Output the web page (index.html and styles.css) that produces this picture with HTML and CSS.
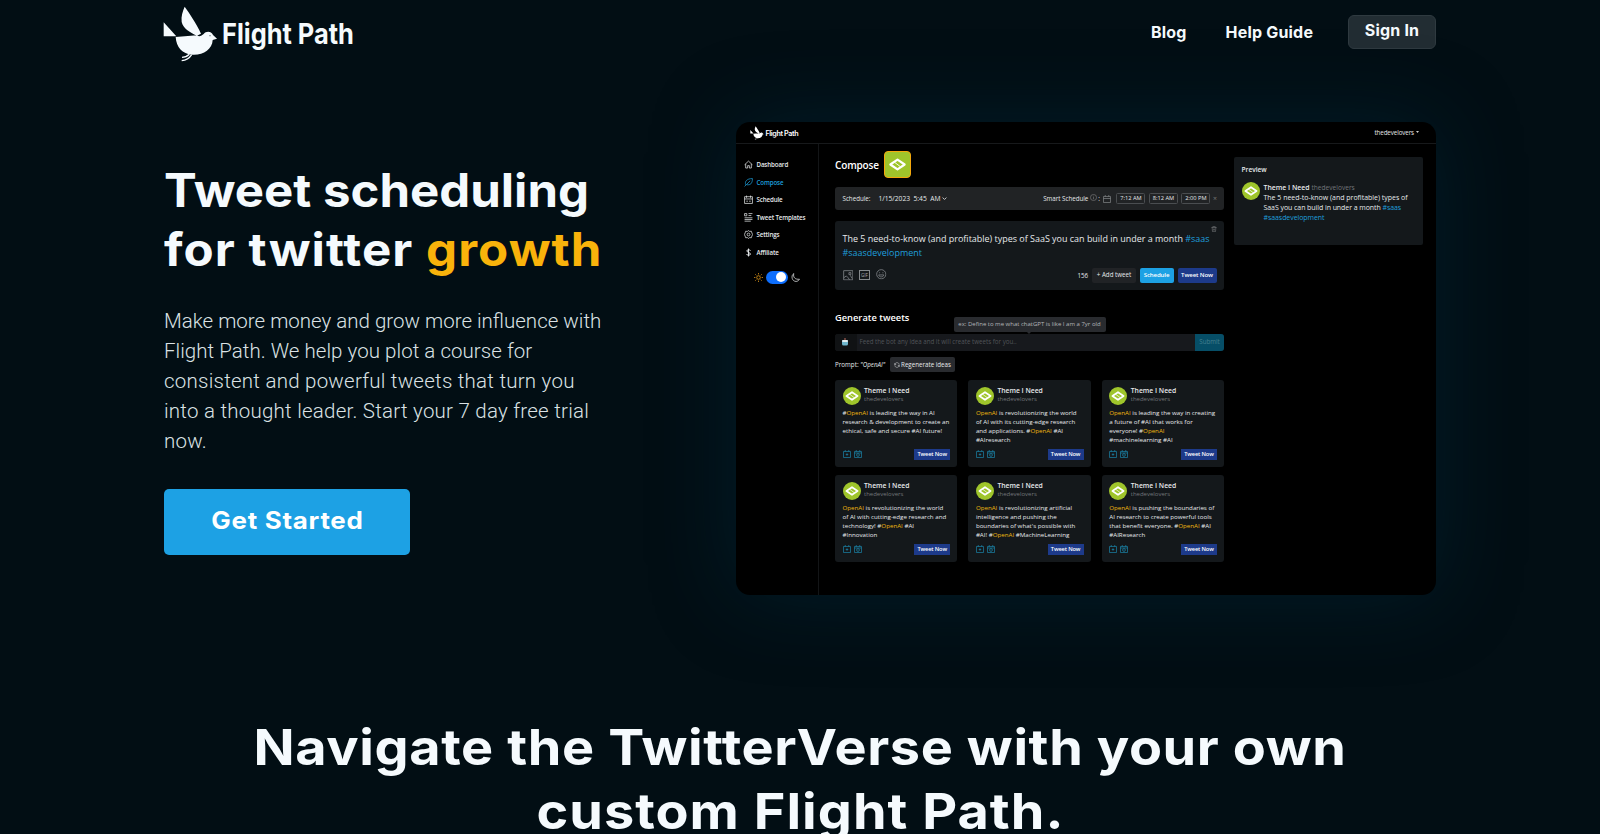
FILE: index.html
```html
<!DOCTYPE html>
<html lang="en">
<head>
<meta charset="utf-8">
<title>Flight Path</title>
<link rel="stylesheet" href="styles.css">
</head>
<body>
<svg class="defs" aria-hidden="true">
  <symbol id="bird" viewBox="40 18 164 168">
    <path fill="currentColor" d="M42 67L80 109H42ZM105 20C118 38 140 70 154 101L142 107C120 98 100 84 96 66C94 48 99 34 105 20ZM78 111L142 106C150 112 156 106 162 102C168 94 184 92 190 105L202 116L189 120C188 148 160 166 128 164C98 162 80 142 78 111Z"/>
    <path fill="none" stroke="currentColor" stroke-width="4" d="M119 163C113 169 106 172 97 172M126 164C119 175 110 181 96 182"/>
    <circle cx="181" cy="107" r="2" fill="#5c686d"/>
  </symbol>
  <symbol id="mark" viewBox="0 0 18 18"><path fill="none" stroke="#fff" stroke-width="1.7" stroke-linejoin="round" d="M3.400 9L9 5.200 14.600 9 9 12.800z"/><path fill="none" stroke="#fff" stroke-width=".7" d="M7 7.500L11 10.500"/></symbol>
  <symbol id="home" viewBox="0 0 16 16"><path d="M1 8.500L8 2l7 6.500M3 7v7.300h3.500V10h3v4.300H13V7"/></symbol>
  <symbol id="feather" viewBox="0 0 16 16"><path d="M1 15L11 5M3 12C1 6 5 1 15 1c0 9-4 12-10 11"/></symbol>
  <symbol id="cal" viewBox="0 0 16 16"><path d="M1 3h14v12H1zM1 7h14M4.500 1v4M11.500 1v4M4 11h3M9 11h3"/></symbol>
  <symbol id="calplain" viewBox="0 0 16 16"><path d="M1 3h14v12H1zM1 7h14M4.500 0v3M11.500 0v3"/></symbol>
  <symbol id="list" viewBox="0 0 16 16"><path d="M1 1h4v4H1zM8 1h7M8 4.500h5M1 8.500h14M1 11.500h14M1 14.500h11"/></symbol>
  <symbol id="gear" viewBox="0 0 16 16"><path d="M8 1l2 1.500 3-.3 1 3L15.300 8 14 10.800l-1 3-3-.3L8 15l-2-1.500-3 .3-1-3L.7 8 2 5.200l1-3 3 .3z"/><circle cx="8" cy="8" r="2.500"/></symbol>
  <symbol id="dollar" viewBox="0 0 16 16"><path stroke-width="1.700" d="M8 1v14M11.500 4.800C11 2.500 5 2.500 5 5.200S11.500 8 11.500 10.800 5 13.500 4.500 10.800"/></symbol>
  <symbol id="sun" viewBox="0 0 16 16"><circle cx="8" cy="8" r="3.200"/><path d="M8 0v2.500M8 13.500V16M0 8h2.500M13.500 8H16M2.300 2.300l1.800 1.800M11.900 11.900l1.800 1.800M2.300 13.700l1.800-1.800M11.900 4.100l1.800-1.800"/></symbol>
  <symbol id="moon" viewBox="0 0 16 16"><path d="M5 1C-1 5 2 15 9 15c3 0 5-2 6-4C8 12 3 8 5 1z"/></symbol>
  <symbol id="pic" viewBox="0 0 16 16"><path d="M1 1h14v14H1zM1 12l4-3 3 3 2 3M9 4h3v3H9zM11 8l3 5"/></symbol>
  <symbol id="smile" viewBox="0 0 16 16"><circle cx="8" cy="8" r="7"/><path d="M4 9c1 4 7 4 8 0zM5.500 5v1.500M10.500 5v1.500"/></symbol>
  <symbol id="trash" viewBox="0 0 16 16"><path d="M1 4h14M5 4V1h6v3M3 4l1 11h8l1-11M6.500 7v5M9.500 7v5"/></symbol>
  <symbol id="info" viewBox="0 0 16 16"><circle cx="8" cy="8" r="7"/><path d="M8 7v5M8 4v1.500"/></symbol>
  <symbol id="redo" viewBox="0 0 16 16"><path d="M14 7C13 0 3 0 2 7M2 9c1 7 11 7 12 0M2 3v4h4M14 13V9h-4"/></symbol>
  <symbol id="caladd" viewBox="0 0 16 16"><path d="M1 3h14v12H1zM4.500 0v3M11.500 0v3M8 6.500v5M5.500 9h5"/></symbol>
  <symbol id="calclock" viewBox="0 0 16 16"><path d="M1 3h14v12H1zM4.500 0v3M11.500 0v3M1 6h14"/><circle cx="8" cy="10" r="2.800"/></symbol>
</svg>

<header class="site-header">
  <a class="brand"><svg class="brand-bird"><use href="#bird"/></svg><span class="brand-name">Flight Path</span></a>
  <nav class="site-nav"><a class="nav-blog">Blog</a><a class="nav-help">Help Guide</a><a class="sign-in">Sign In</a></nav>
</header>

<main>
<section class="hero">
  <div class="pitch">
    <h1><span class="h1-a">Tweet scheduling</span><br><span class="h1-b">for twitter <em>growth</em></span></h1>
    <p>Make more money and grow more influence with<br><span class="l2">Flight Path. We help you plot a course for</span><br><span class="loose">consistent and powerful tweets that turn you<br>into a thought leader. Start your 7 day free trial<br>now.</span></p>
    <a class="cta"><span>Get Started</span></a>
  </div>

  <div class="app">
    <div class="app-top">
      <div class="app-brand"><svg class="app-bird"><use href="#bird"/></svg><span>Flight Path</span></div>
      <div class="user">thedevelovers<i class="caret"></i></div>
    </div>
    <div class="app-body">
      <aside class="side">
        <a><svg class="ico"><use href="#home"/></svg>Dashboard</a>
        <a class="on"><svg class="ico"><use href="#feather"/></svg>Compose</a>
        <a><svg class="ico"><use href="#cal"/></svg>Schedule</a>
        <a><svg class="ico"><use href="#list"/></svg>Tweet Templates</a>
        <a><svg class="ico"><use href="#gear"/></svg>Settings</a>
        <a><svg class="ico"><use href="#dollar"/></svg>Affiliate</a>
        <div class="theme"><svg class="ico sun"><use href="#sun"/></svg><i class="toggle"></i><svg class="ico"><use href="#moon"/></svg></div>
      </aside>

      <div class="work">
        <div class="title"><h2>Compose</h2><span class="tile"><svg><use href="#mark"/></svg></span></div>

        <div class="sched">
          <span>Schedule:</span><span class="date">1/15/2023&nbsp; 5:45 &nbsp;AM</span>
          <svg class="chev" viewBox="0 0 8 8"><path d="M1 2.500l3 3 3-3"/></svg>
          <span class="smart">Smart Schedule</span><svg class="ico tiny"><use href="#info"/></svg><span class="colon">:</span>
          <svg class="ico scal"><use href="#calplain"/></svg>
          <b class="time">7:12 AM</b><b class="time">8:12 AM</b><b class="time">2:00 PM</b><span class="x">×</span>
        </div>

        <div class="editor">
          <svg class="ico trash"><use href="#trash"/></svg>
          <p>The 5 need-to-know (and profitable) types of SaaS you can build in under a month <a>#saas</a><br><a>#saasdevelopment</a></p>
          <div class="tools">
            <svg class="ico"><use href="#pic"/></svg><span class="gif">GIF</span><svg class="ico smile"><use href="#smile"/></svg>
            <span class="count">156</span><b class="btn add">+ Add tweet</b><b class="btn sky">Schedule</b><b class="btn navy">Tweet Now</b>
          </div>
        </div>

        <h3>Generate tweets</h3>
        <div class="bot">
          <span class="tip">ex: Define to me what chatGPT is like I am a 7yr old</span>
          <span class="robot"><svg viewBox="0 0 8 8"><rect x="1" y="2" width="6" height="5.500" rx="1.500" fill="#6fb6cc"/><rect x="1" y="2" width="6" height="2" rx="1" fill="#e4eef0"/><path d="M4 0v2" stroke="#bb6a5c"/></svg></span>
          <span class="ask">Feed the bot any idea and it will create tweets for you..</span>
          <span class="submit">Submit</span>
        </div>
        <div class="prompt"><span>Prompt: <i>"OpenAI"</i></span><b class="regen"><svg class="ico"><use href="#redo"/></svg>Regenerate ideas</b></div>

        <div class="cards">
          <article><header><span class="ava"><svg><use href="#mark"/></svg></span><div><b>Theme I Need</b><small>thedevelovers</small></div></header>
            <p>#<em>OpenAI</em> is leading the way in AI<br>research &amp; development to create an<br>ethical, safe and secure #AI future!</p>
            <footer><svg class="ico"><use href="#caladd"/></svg><svg class="ico"><use href="#calclock"/></svg><b>Tweet Now</b></footer></article>
          <article><header><span class="ava"><svg><use href="#mark"/></svg></span><div><b>Theme I Need</b><small>thedevelovers</small></div></header>
            <p><em>OpenAI</em> is revolutionizing the world<br>of AI with its cutting-edge research<br>and applications. #<em>OpenAI</em> #AI<br>#AIresearch</p>
            <footer><svg class="ico"><use href="#caladd"/></svg><svg class="ico"><use href="#calclock"/></svg><b>Tweet Now</b></footer></article>
          <article><header><span class="ava"><svg><use href="#mark"/></svg></span><div><b>Theme I Need</b><small>thedevelovers</small></div></header>
            <p><em>OpenAI</em> is leading the way in creating<br>a future of #AI that works for<br>everyone! #<em>OpenAI</em><br>#machinelearning #AI</p>
            <footer><svg class="ico"><use href="#caladd"/></svg><svg class="ico"><use href="#calclock"/></svg><b>Tweet Now</b></footer></article>
          <article><header><span class="ava"><svg><use href="#mark"/></svg></span><div><b>Theme I Need</b><small>thedevelovers</small></div></header>
            <p><em>OpenAI</em> is revolutionizing the world<br>of AI with cutting-edge research and<br>technology! #<em>OpenAI</em> #AI<br>#Innovation</p>
            <footer><svg class="ico"><use href="#caladd"/></svg><svg class="ico"><use href="#calclock"/></svg><b>Tweet Now</b></footer></article>
          <article><header><span class="ava"><svg><use href="#mark"/></svg></span><div><b>Theme I Need</b><small>thedevelovers</small></div></header>
            <p><em>OpenAI</em> is revolutionizing artificial<br>intelligence and pushing the<br>boundaries of what's possible with<br>#AI! #<em>OpenAI</em> #MachineLearning</p>
            <footer><svg class="ico"><use href="#caladd"/></svg><svg class="ico"><use href="#calclock"/></svg><b>Tweet Now</b></footer></article>
          <article><header><span class="ava"><svg><use href="#mark"/></svg></span><div><b>Theme I Need</b><small>thedevelovers</small></div></header>
            <p><em>OpenAI</em> is pushing the boundaries of<br>AI research to create powerful tools<br>that benefit everyone. #<em>OpenAI</em> #AI<br>#AIResearch</p>
            <footer><svg class="ico"><use href="#caladd"/></svg><svg class="ico"><use href="#calclock"/></svg><b>Tweet Now</b></footer></article>
        </div>
      </div>

      <div class="preview">
        <h4>Preview</h4>
        <div class="post"><span class="ava"><svg><use href="#mark"/></svg></span>
          <p><b>Theme I Need</b> <small>thedevelovers</small><br>The 5 need-to-know (and profitable) types of<br><span class="tight">SaaS you can build in under a month <a>#saas</a><br><a>#saasdevelopment</a></span></p></div>
      </div>
    </div>
  </div>
</section>

<section class="navigate">
  <h2><span class="nav-a">Navigate the TwitterVerse with your own</span><br><span class="nav-b">custom Flight Path.</span></h2>
</section>
</main>
</body>
</html>
```
FILE: styles.css
```css
* { box-sizing: border-box; }
html, body { height: 100%; }
body {
  margin: 0;
  overflow: hidden;
  background: #020e14;
  color: #f5fafd;
  font-family: Inter, "Liberation Sans", sans-serif;
}
h1, h2, h3, h4, p { margin: 0; }
svg { display: block; flex: none; }
.defs { display: none; }
.ico { width: 9px; height: 9px; fill: none; stroke: currentColor; stroke-width: 1.3; }

/* Site header */
.site-header {
  width: 1272px;
  height: 70px;
  margin: 0 auto;
  display: flex;
  justify-content: space-between;
}
.brand { display: flex; }
.brand-bird { width: 54.700px; height: 56px; margin: 6px 0 0 -.7px; }
.brand-name {
  margin: 15.500px 0 0 4px;
  font-size: 29px;
  line-height: 35px;
  font-weight: 700;
  white-space: nowrap;
  transform: scaleX(.876);
  transform-origin: left;
}
.site-nav { display: flex; font-size: 16px; font-weight: 700; line-height: 20px; white-space: nowrap; letter-spacing: .2px; }
.nav-blog { width: 74.500px; padding-top: 22px; }
.nav-help { width: 122.500px; padding-top: 22px; }
.sign-in {
  width: 88px;
  height: 34px;
  margin-top: 15px;
  padding-top: 4px;
  border: 1px solid #2f3a40;
  border-radius: 6px;
  background: #222d33;
  text-align: center;
}

/* Hero */
.hero {
  width: 1272px;
  margin: 0 auto;
  display: flex;
  justify-content: space-between;
  align-items: flex-start;
}
.pitch { padding-top: 90.500px; white-space: nowrap; }
h1 { width: 440px; font-size: 46px; line-height: 59px; font-weight: 700; }
h1 span { display: inline-block; transform-origin: left; }
.h1-a { transform: scaleX(1.068); }
.h1-b { letter-spacing: .98px; transform: scaleX(1.070); }
h1 em { font-style: normal; color: #f9b30b; }
.pitch p {
  margin-top: 27px;
  font: 300 20.500px/30px Roboto, "Liberation Sans", sans-serif;
  color: #dbe2e5;
}
.l2 { letter-spacing: .04px; }
.loose { letter-spacing: .24px; }
.cta {
  display: block;
  width: 246px;
  height: 66px;
  margin-top: 33.500px;
  border-radius: 5px;
  background: #1da1e4;
  color: #fff;
  font-size: 24px;
  font-weight: 700;
  line-height: 64.500px;
  letter-spacing: .67px;
  text-align: center;
}
.cta span { display: inline-block; transform: scaleX(1.080); }

/* Product window */
.app {
  width: 700px;
  height: 473px;
  margin-top: 52px;
  border-radius: 14px;
  overflow: hidden;
  background: #000;
  color: #e6e9eb;
  font-family: "Open Sans", "Noto Sans", sans-serif;
  font-size: 6.200px;
  white-space: nowrap;
  box-shadow: 0 0 84px rgba(0, 55, 78, .34);
}
.app-top {
  height: 22px;
  padding: 0 17px 0 14px;
  border-bottom: 1px solid #17191b;
  display: flex;
  justify-content: space-between;
}
.app-brand { display: flex; align-items: flex-start; color: #fff; font: 600 7.200px/10px Inter, sans-serif; letter-spacing: -.38px; }
.app-brand span { margin: 6.500px 0 0 1.500px; }
.app-bird { width: 14px; height: 14px; margin-top: 4px; }
.user { display: flex; align-items: center; font-size: 6.200px; letter-spacing: -.08px; height: 20px; }
.caret { width: 3px; height: 2px; margin-left: 2px; background: #ccc; clip-path: polygon(0 0, 100% 0, 50% 100%); }
.app-body { height: 451px; display: flex; align-items: flex-start; }
.side {
  width: 82.500px;
  height: 451px;
  padding: 12px 0 0 7.500px;
  border-right: 1px solid #131517;
  font-size: 6.200px;
  letter-spacing: -.13px;
  font-weight: 600;
}
.side a { height: 17.500px; display: flex; align-items: center; gap: 4px; }
.side .on { color: #1d9fdc; }
.theme { display: flex; align-items: center; gap: 3.500px; margin: 6px 0 0 10px; height: 20px; }
.sun { color: #f0a21c; }
.toggle { width: 21.500px; height: 13px; padding: 1.500px; border-radius: 7px; background: #0d6efd; display: flex; justify-content: flex-end; }
.toggle::after { content: ""; width: 10px; height: 10px; border-radius: 50%; background: #fff; }

.work { width: 389px; margin-left: 16.500px; padding-top: 7px; }
.title { display: flex; align-items: center; height: 27px; gap: 6px; }
.title h2 { font-size: 10px; letter-spacing: -.15px; font-weight: 600; color: #fff; width: 43px; }
.tile { width: 27px; height: 27px; border: 1px solid #f5a80d; border-radius: 4px; background: #9fc52b; display: grid; place-items: center; }
.tile svg { width: 23px; height: 23px; }
.sched {
  height: 23px;
  margin-top: 9px;
  padding: 0 7px 0 7.500px;
  border-radius: 3px;
  background: #212325;
  display: flex;
  align-items: center;
}
.date { margin-left: 8px; font-size: 6.700px; }
.chev { width: 5px; height: 5px; margin-left: 2px; fill: none; stroke: #ddd; stroke-width: 1.400; }
.smart { margin-left: auto; }
.tiny { width: 7px; height: 7px; margin: -3px 1px 0 2px; color: #888; }
.scal { width: 8px; height: 8px; margin: 0 5.500px 0 3px; color: #8b8e90; }
.time { width: 29px; height: 11.500px; margin-right: 3.500px; border: 1px solid #4a4d50; border-radius: 1.500px; font-size: 5.700px; line-height: 9.500px; font-weight: 400; text-align: center; }
.x { color: #777; font-size: 7px; margin-left: -1px; }
.editor {
  position: relative;
  height: 69px;
  margin-top: 11px;
  padding: 10.500px 7.500px 0;
  border-radius: 3px;
  background: #14181b;
}
.trash { position: absolute; right: 7px; top: 5px; width: 6px; height: 6px; color: #8a8d90; }
.editor p { font-size: 8.960px; line-height: 14.900px; }
.app p a { color: #1f9fdc; }
.tools { display: flex; align-items: center; margin-top: 6.500px; height: 15px; }
.tools .ico { width: 10.500px; height: 10.500px; color: #85898c; stroke-width: 1.200; }
.tools .smile { margin-top: -2px; }
.gif { width: 11px; height: 10px; margin: 0 6px; border: 1px solid #85898c; font-size: 4.500px; line-height: 8px; text-align: center; color: #a5a8aa; }
.count { margin: 0 4px 0 auto; }
.btn { height: 15px; line-height: 14.500px; border-radius: 2px; font-weight: 400; text-align: center; }
.add { width: 44px; background: #212326; }
.sky { width: 34px; margin: 0 4px 0 3.500px; background: #1da1e4; color: #fff; font-weight: 600; font-size: 6.100px; letter-spacing: -.12px; }
.navy { width: 39px; background: #1d3a8a; color: #fff; font-weight: 600; font-size: 6.100px; letter-spacing: -.12px; }
.work h3 { margin-top: 21px; font-size: 9.300px; line-height: 14px; font-weight: 600; color: #fff; }
.bot { position: relative; display: flex; height: 16.500px; margin-top: 9px; line-height: 16px; border-radius: 3px; background: #17191d; }
.robot { width: 22px; display: grid; place-items: center; border-radius: 3px 0 0 3px; background: #101214; }
.robot svg { width: 8px; height: 8px; margin-right: 2px; }
.ask { flex: 1; padding-left: 2.500px; color: #515458; }
.submit { width: 29px; border-radius: 0 3px 3px 0; background: #064e67; color: #45808f; text-align: center; }
.tip { position: absolute; left: 118.500px; top: -17px; width: 152px; height: 14.500px; line-height: 14px; border-radius: 2px; background: #292b2f; color: #b3b6b9; text-align: center; font-size: 6px; }
.tip::after { content: ""; position: absolute; left: 73.500px; top: 14.500px; border: 2px solid transparent; border-top-color: #292b2f; }
.prompt { display: flex; align-items: center; height: 15px; margin-top: 6.500px; }
.prompt span { width: 55px; letter-spacing: .04px; }
.regen { width: 64.500px; height: 14.500px; border-radius: 2px; background: #292b2f; display: flex; align-items: center; justify-content: center; gap: 1.500px; font-weight: 400; }
.regen .ico { width: 6px; height: 6px; }
.cards { display: grid; grid-template-columns: repeat(3, 122.200px); gap: 7.700px 11.200px; margin-top: 7.500px; }
.cards article { height: 87.500px; padding: 7px 7px 0 7.500px; border-radius: 3px; background: #14181b; display: flex; flex-direction: column; }
.cards header { display: flex; gap: 3.500px; }
.ava { flex: none; width: 18px; height: 18px; border-radius: 50%; background: #9fc52b; }
.ava svg { width: 18px; height: 18px; }
.cards header b { display: block; margin-top: -1px; font-size: 6.800px; line-height: 9px; font-weight: 600; }
.app small { font-size: 6px; color: #72767a; }
.cards header small { display: block; line-height: 9px; }
.cards p { margin-top: 3px; line-height: 9.130px; font-size: 6.180px; }
.cards em { font-style: normal; color: #efb90f; }
.cards footer { margin: auto 0 7.500px; display: flex; align-items: center; gap: 3px; color: #1a8cb5; }
.cards footer .ico { width: 8px; height: 8px; }
.cards footer b { margin-left: auto; width: 36px; height: 11px; background: #1d3a8a; color: #fff; font-size: 5.700px; letter-spacing: -.14px; line-height: 10.500px; font-weight: 600; text-align: center; }

.preview { width: 189px; height: 87.500px; margin: 13px 0 0 10px; padding: 8px 7.500px 0; border-radius: 2px; background: #14181b; }
.preview h4 { font-size: 6.600px; line-height: 9px; font-weight: 600; }
.post { display: flex; gap: 4px; margin-top: 8px; }
.post p { margin-top: .5px; font-size: 6.970px; line-height: 10.200px; }
.post b { font-size: 6.900px; font-weight: 600; }
.post small { font-size: 6.600px; }
.tight { letter-spacing: -.05px; }

/* Next section */
.navigate { margin-top: 121.300px; text-align: center; white-space: nowrap; }
.navigate h2 { font-size: 50px; line-height: 63.700px; font-weight: 700; }
.navigate span { display: inline-block; transform: scaleX(1.080); }
.nav-a { letter-spacing: .56px; }
.nav-b { letter-spacing: .95px; }
```
